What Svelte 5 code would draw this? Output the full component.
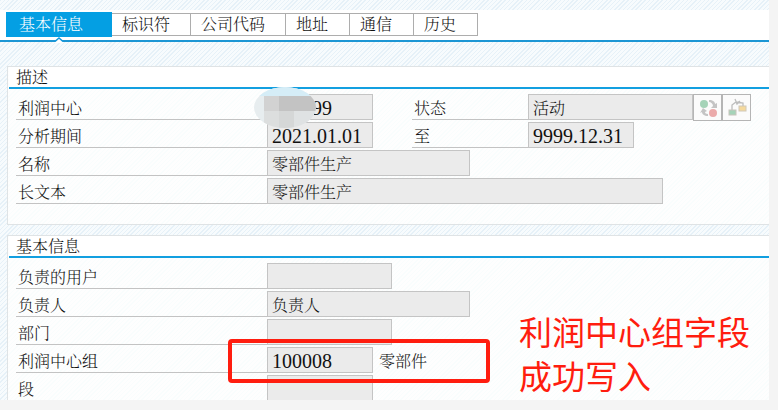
<script lang="ts">
  interface Field {
    id: string
    label: string
    value: string
    size: 'code' | 'user' | 'name' | 'text' | 'status'
    numeric?: boolean
    masked?: boolean
    marked?: boolean
    note?: string
    actions?: boolean
  }

  const tabs = ['基本信息', '标识符', '公司代码', '地址', '通信', '历史']
  let activeTab = $state(0)

  const panels: { title: string; rows: Field[][] }[] = [
    {
      title: '描述',
      rows: [
        [
          { id: 'center', label: '利润中心', value: '100099', size: 'code', numeric: true, masked: true },
          { id: 'status', label: '状态', value: '活动', size: 'status', actions: true },
        ],
        [
          { id: 'from', label: '分析期间', value: '2021.01.01', size: 'code', numeric: true },
          { id: 'to', label: '至', value: '9999.12.31', size: 'code', numeric: true },
        ],
        [{ id: 'name', label: '名称', value: '零部件生产', size: 'name' }],
        [{ id: 'long-text', label: '长文本', value: '零部件生产', size: 'text' }],
      ],
    },
    {
      title: '基本信息',
      rows: [
        [{ id: 'user', label: '负责的用户', value: '', size: 'user' }],
        [{ id: 'person', label: '负责人', value: '负责人', size: 'name' }],
        [{ id: 'department', label: '部门', value: '', size: 'user' }],
        [{ id: 'group', label: '利润中心组', value: '100008', size: 'code', numeric: true, marked: true, note: '零部件' }],
        [{ id: 'segment', label: '段', value: '', size: 'code' }],
      ],
    },
  ]
</script>

<main class="screen">
  <nav class="tab-bar">
    {#each tabs as tab, i}
      <button class="tab" class:active={activeTab === i} onclick={() => (activeTab = i)}>
        {tab}
        {#if activeTab === i}
          <svg class="caret" viewBox="0 0 8 6" aria-hidden="true">
            <path d="M0 5 L4 1 L8 5 V6 H0 Z" fill="#fff" />
            <path d="M0 4.5 L4 1 L8 4.5" fill="none" stroke="#1397dc" stroke-width="1.5" />
          </svg>
        {/if}
      </button>
    {/each}
  </nav>

  {#each panels as panel}
    <section class="panel">
      <h2 class="panel-title">{panel.title}</h2>
      <div class="rows">
        {#each panel.rows as row}
          <div class="row">
            {#each row as field}
              <div class="field">
                <label for={field.id}>{field.label}</label>
                <input id={field.id} class={field.size} class:numeric={field.numeric} value={field.value} readonly />
                {#if field.note}
                  <span class="note">{field.note}</span>
                {/if}
                {#if field.masked}
                  <svg class="mask" viewBox="0 0 62 41" aria-hidden="true">
                    <clipPath id="mask-shape"><ellipse cx="31" cy="20.5" rx="31" ry="20.5" /></clipPath>
                    <g clip-path="url(#mask-shape)">
                      <rect width="62" height="41" fill="#e7edef" />
                      <rect width="62" height="9" fill="#d5edf7" />
                      <rect x="10" y="9" width="15" height="15" fill="#d2d2d2" />
                      <rect x="25" y="9" width="37" height="15" fill="#c3c3c3" />
                      <rect x="10" y="24" width="15" height="17" fill="#dcdede" />
                      <rect x="25" y="24" width="15" height="17" fill="#d5d7d7" />
                      <rect x="40" y="24" width="22" height="17" fill="#dfe2e3" />
                    </g>
                  </svg>
                {/if}
                {#if field.actions}
                  <button class="action" aria-label="更改状态">
                    <svg viewBox="0 0 20 20">
                      <circle cx="6" cy="6" r="4" fill="#a5d3b8" />
                      <circle cx="15" cy="15" r="4" fill="#ebaaaa" />
                      <path d="M11 2 C15 2 17 4 17 6 L19 5 V10 H13 L15 8 C15 6 13 4 11 4 Z" fill="#c4c4c4" />
                      <path d="M10 18 C6 18 4 16 4 14 L2 15 L5 10 L9 13 L7 14 C7 15 8 16 10 16 Z" fill="#c4c4c4" />
                    </svg>
                  </button>
                  <button class="action" aria-label="层次结构">
                    <svg viewBox="0 0 20 20">
                      <path d="M5 12 V7 L9 4 L16 5 V8 M8 1 L10 6 L13 3" fill="none" stroke="#bdbdbd" stroke-width="1.3" />
                      <rect x="2" y="12" width="7" height="5" fill="#a5d3b8" stroke="#c8c4bc" />
                      <rect x="12" y="8" width="7" height="5" fill="#f5d99c" stroke="#d0c8b8" />
                    </svg>
                  </button>
                {/if}
                {#if field.marked}
                  <span class="mark"></span>
                  <p class="remark">利润中心组字段<br />成功写入</p>
                {/if}
              </div>
            {/each}
          </div>
        {/each}
      </div>
    </section>
  {/each}
</main>

<style>
  :global(body) {
    background: #f4f4f4;
  }

  .screen {
    box-sizing: border-box;
    height: calc(100vh - 10px);
    margin-right: 9px;
    padding-top: 10px;
    overflow: hidden;
    background: repeating-linear-gradient(135deg, #e6f1f8 0 1px, #f7fbfd 1px 3px);
    color: #111;
    font-family: 'Liberation Serif', 'Noto Serif CJK SC', 'Noto Sans CJK SC', serif;
    font-size: 16px;
    font-weight: 300;
  }

  button,
  input {
    box-sizing: border-box;
    margin: 0;
    border-radius: 0;
    color: inherit;
    font: inherit;
  }

  .tab-bar {
    display: flex;
    align-items: flex-start;
    box-sizing: border-box;
    height: 32px;
    padding: 2px 0 0 6px;
    border-bottom: 2px solid #1c96d4;
    background: #fff;
  }

  .tab {
    position: relative;
    height: 23px;
    min-width: 64px;
    margin-top: 1px;
    padding: 0 20px 0 10px;
    border: solid #adadad;
    border-width: 1px 1px 1px 0;
    background: #fff;
    line-height: 22px;
    text-align: left;
    white-space: nowrap;
  }

  .tab.active {
    height: 25px;
    margin-top: 0;
    padding: 0 29px 0 13px;
    border: none;
    background: #049fe3;
    color: #fff;
    line-height: 26px;
  }

  .caret {
    position: absolute;
    top: 25px;
    left: 50%;
    width: 8px;
    height: 6px;
    transform: translateX(-50%);
  }

  .panel {
    margin: 24px 0 0 7px;
    border: 1px solid #dfe3e5;
    border-right: none;
    background: repeating-linear-gradient(135deg, #f9fdfd 0 1px, #fefefe 1px 3px);
  }

  .panel + .panel {
    margin-top: 10px;
  }

  .panel-title {
    height: 20px;
    margin: 0 0 0 1px;
    padding-left: 7px;
    border-bottom: 2px solid #129fe0;
    background: #fff;
    font-size: 16px;
    font-weight: 300;
    line-height: 22px;
  }

  .rows {
    display: grid;
    gap: 2px;
    padding: 5px 0 20px 8px;
  }

  .row {
    display: flex;
    gap: 39px;
  }

  .field {
    position: relative;
    display: flex;
    height: 26px;
  }

  label {
    box-sizing: border-box;
    width: 251px;
    padding-left: 2px;
    border-bottom: 1px solid #c3c3c3;
    line-height: 30px;
    white-space: nowrap;
  }

  .field + .field label {
    width: 116px;
  }

  input {
    padding: 0 4px;
    border: 1px solid #c4c4c4;
    background: #ebebeb;
    outline: none;
  }

  .code {
    width: 106px;
  }

  .user {
    width: 125px;
  }

  .name {
    width: 203px;
  }

  .text {
    width: 396px;
  }

  .status {
    width: 165px;
  }

  .numeric {
    padding-top: 2px;
    font-size: 20px;
  }

  .action {
    display: grid;
    place-items: center;
    width: 29px;
    height: 27px;
    padding: 0;
    border: 1px solid #b5b5b5;
    background: #fbfbfb;
  }

  .action svg {
    width: 20px;
    height: 20px;
  }

  .note {
    padding-left: 6px;
    line-height: 30px;
    white-space: nowrap;
  }

  .mask {
    position: absolute;
    z-index: 1;
    top: -7px;
    left: 238px;
    width: 62px;
    height: 41px;
  }

  .mark {
    position: absolute;
    z-index: 1;
    top: -8px;
    left: 212px;
    box-sizing: border-box;
    width: 262px;
    height: 44px;
    border: 4px solid #ff1d0f;
    border-radius: 4px;
  }

  .remark {
    position: absolute;
    top: -38px;
    left: 503px;
    margin: 0;
    color: #ff1d0f;
    font-family: 'Noto Sans CJK SC', sans-serif;
    font-size: 33px;
    font-weight: 400;
    line-height: 44px;
    white-space: nowrap;
  }
</style>
